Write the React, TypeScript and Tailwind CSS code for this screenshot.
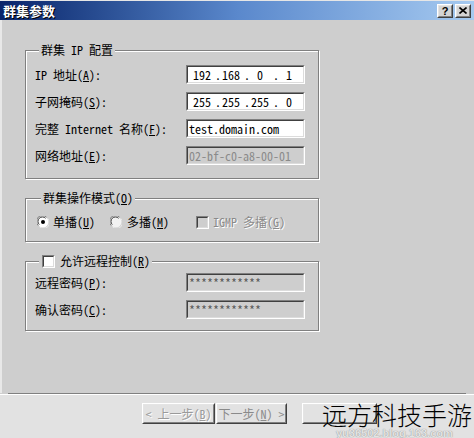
import React from "react";

const FONT = "font-['Noto_Sans_Mono_CJK_SC','Noto_Sans_CJK_SC',sans-serif]";

const Sunken: React.FC<{ disabled?: boolean; children?: React.ReactNode; muted?: string }> = ({ disabled, children, muted }) => (
  <div className="w-[119px] h-[19px] border border-t-[#808080] border-l-[#808080] border-b-white border-r-white">
    <div
      className={`h-full border border-t-[#404040] border-l-[#404040] border-b-[#dcdcdc] border-r-[#dcdcdc] flex items-center pl-[1px] text-[12px] leading-[14px] ${
        disabled ? "bg-[#cecece]" : "bg-white text-black"
      } ${muted ?? ""}`}
    >
      {children}
    </div>
  </div>
);

const IpField: React.FC<{ parts: string[] }> = ({ parts }) => (
  <Sunken>
    <div className="flex">
      {parts.map((p, i) => (
        <React.Fragment key={i}>
          <span className="w-[26px] text-center">{p}</span>
          {i < 3 && <span className="w-[3px] text-center">.</span>}
        </React.Fragment>
      ))}
    </div>
  </Sunken>
);

const Radio: React.FC<{ checked?: boolean }> = ({ checked }) => (
  <svg width="12" height="12" viewBox="0 0 12 12" className="shrink-0">
    <circle cx="6" cy="6" r="5.5" fill={checked ? "#fff" : "#f2f2f2"} />
    <path d="M1.2 9.5 A5.5 5.5 0 0 1 9.5 1.2" stroke="#808080" strokeWidth="1" fill="none" />
    <path d="M2.3 8.6 A4.3 4.3 0 0 1 8.6 2.3" stroke="#404040" strokeWidth="1" fill="none" />
    <path d="M10.8 2.5 A5.5 5.5 0 0 1 2.5 10.8" stroke="#e8e8e8" strokeWidth="1" fill="none" />
    {checked && <circle cx="6" cy="6" r="2" fill="#000" />}
  </svg>
);

const Check: React.FC<{ disabled?: boolean }> = ({ disabled }) => (
  <div className="w-[13px] h-[13px] shrink-0 border border-t-[#808080] border-l-[#808080] border-b-white border-r-white">
    <div className={`h-full border border-t-[#404040] border-l-[#404040] border-b-[#dcdcdc] border-r-[#dcdcdc] ${disabled ? "bg-[#cecece]" : "bg-white"}`} />
  </div>
);

const Raised: React.FC<{ className?: string; children?: React.ReactNode }> = ({ className, children }) => (
  <div className={`border border-t-white border-l-white border-b-[#404040] border-r-[#404040] ${className ?? ""}`}>
    <div className="h-full border border-t-[#e4e4e4] border-l-[#e4e4e4] border-b-[#808080] border-r-[#808080] flex items-center justify-center">
      {children}
    </div>
  </div>
);

const Group: React.FC<{ legend: React.ReactNode; className?: string; children: React.ReactNode }> = ({ legend, className, children }) => (
  <fieldset className={`w-[294px] border border-[#808080] shadow-[inset_1px_1px_0_#fff,1px_1px_0_#fff] ${className ?? ""}`}>
    <legend className="ml-[4px] px-[2px] leading-[14px] bg-[#cecece]">{legend}</legend>
    {children}
  </fieldset>
);

const Row: React.FC<{ label: React.ReactNode; children: React.ReactNode }> = ({ label, children }) => (
  <div className="flex items-center h-[19px]">
    <span className="w-[151px] whitespace-nowrap">{label}</span>
    {children}
  </div>
);

export default function App() {
  return (
    <div className={`relative w-[474px] h-[438px] overflow-hidden bg-[#cecece] text-black text-[12px] leading-[14px] ${FONT}`}>
      <div className="h-[1px] bg-[#e6e6e6]" />
      {/* title bar */}
      <div className="h-[19px] flex items-center justify-between pl-[3px] pr-[3px] bg-gradient-to-r from-[#0a246a] via-[#5a88cc] to-[#a6caf0]">
        <span className="text-white font-bold text-[13px] leading-[15px] [text-shadow:1px_1px_0_#000]">群集参数</span>
        <div className="flex gap-[2px]">
          <Raised className="w-[16px] h-[14px] bg-[#d4d4d4]">
            <span className="font-bold text-[11px] leading-[10px] font-['Liberation_Sans',sans-serif]">?</span>
          </Raised>
          <Raised className="w-[16px] h-[14px] bg-[#d4d4d4]">
            <svg width="8" height="7" viewBox="0 0 8 7">
              <path d="M0.5 0.5 L7.5 6.5 M7.5 0.5 L0.5 6.5" stroke="#000" strokeWidth="1.6" />
            </svg>
          </Raised>
        </div>
      </div>

      <div className="h-[373px] border-l-2 border-l-[#e8e8e8] pl-[23px] pt-[23px] flex flex-col">
        <Group legend="群集 IP 配置" className="pl-[9px] pb-[13px]">
          <div className="mt-[8px] flex flex-col gap-[8px]">
            <Row label={<>IP 地址(<u>A</u>):</>}>
              <IpField parts={["192", "168", "0", "1"]} />
            </Row>
            <Row label={<>子网掩码(<u>S</u>):</>}>
              <IpField parts={["255", "255", "255", "0"]} />
            </Row>
            <Row label={<>完整 Internet 名称(<u>F</u>):</>}>
              <Sunken>test.domain.com</Sunken>
            </Row>
            <Row label={<span>网络地址(<u>E</u>):</span>}>
              <Sunken disabled muted="text-[#8a8a8a]">02-bf-c0-a8-00-01</Sunken>
            </Row>
          </div>
        </Group>

        <Group legend={<>群集操作模式(<u>O</u>)</>} className="mt-[12px] pl-[11px] pb-[12px]">
          <div className="mt-[10px] flex items-center h-[14px]">
            <Radio checked />
            <span className="ml-[4px]">单播(<u>U</u>)</span>
            <span className="ml-[15px]"><Radio /></span>
            <span className="ml-[5px]">多播(<u>M</u>)</span>
            <span className="ml-[27px]"><Check disabled /></span>
            <span className="ml-[4px] text-[#8a8a8a] [text-shadow:1px_1px_0_#fff]">IGMP 多播(<u>G</u>)</span>
          </div>
        </Group>

        <Group
          legend={
            <span className="flex items-center gap-[5px] pl-[1px]">
              <Check />
              <span>允许远程控制(<u>R</u>)</span>
            </span>
          }
          className="mt-[12px] pl-[9px] pb-[11px]"
        >
          <div className="mt-[5px] flex flex-col gap-[8px]">
            <Row label={<>远程密码(<u>P</u>):</>}>
              <Sunken disabled muted="text-[#555]">************</Sunken>
            </Row>
            <Row label={<>确认密码(<u>C</u>):</>}>
              <Sunken disabled muted="text-[#555]">************</Sunken>
            </Row>
          </div>
        </Group>
      </div>

      {/* separator */}
      <div className="mx-[8px] h-[1px] bg-[#808080]" />
      <div className="h-[44px] border-t border-t-white bg-[#e2e2e2] flex items-start pt-[8px] pl-[142px] gap-[1px]">
        <Raised className="w-[73px] h-[21px]">
          <span className="text-[#9a9a9a] [text-shadow:1px_1px_0_#fff]">&lt; 上一步(<u>B</u>)</span>
        </Raised>
        <Raised className="w-[71px] h-[21px]">
          <span className="text-[#8a8a8a]">下一步(<u>N</u>) &gt;</span>
        </Raised>
        <Raised className="ml-[14px] w-[75px] h-[21px]" />
      </div>

      {/* watermark */}
      <div className="absolute left-[322px] top-[400px] text-[25px] leading-[28px] font-light text-black font-['Noto_Sans_CJK_SC',sans-serif] whitespace-nowrap">
        远方科技手游
      </div>
      <div className="absolute left-[336px] top-[428px] text-[11px] leading-[10px] font-bold text-[#e4e4e4] [text-shadow:0_0_1px_#777] font-['Liberation_Sans',sans-serif]">
        yu36502.blog.163.com
      </div>
    </div>
  );
}
